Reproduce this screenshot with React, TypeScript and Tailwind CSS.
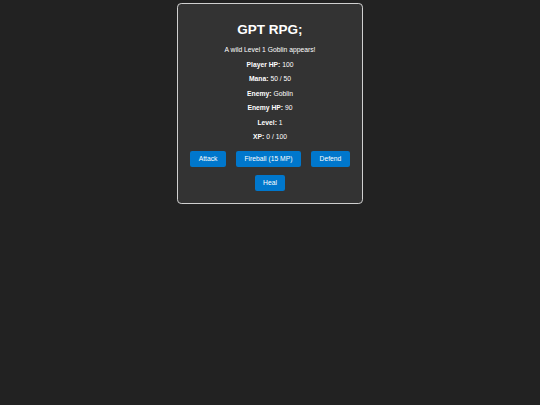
const STATS = [
  { label: "Player HP", value: "100" },
  { label: "Mana", value: "50 / 50" },
  { label: "Enemy", value: "Goblin" },
  { label: "Enemy HP", value: "90" },
  { label: "Level", value: "1" },
  { label: "XP", value: "0 / 100" },
];

const ACTIONS = ["Attack", "Fireball (15 MP)", "Defend", "Heal"];

export default function App() {
  return (
    <div
      className="min-h-screen w-full bg-[#222222] pt-[3.4px] text-white"
      style={{ fontFamily: '"Liberation Sans", Arial, sans-serif' }}
    >
      <div className="mx-auto w-[186.5px] rounded-[4.2px] border border-[#d0d0d0] bg-[#333333] px-[8.4px] py-[8.4px] text-center">
        <h1 className="my-[9px] text-[13.5px] font-bold leading-[15.5px]">GPT RPG;</h1>

        <p className="my-[6.75px] text-[6.75px] leading-[7.76px]">
          A wild Level 1 Goblin appears!
        </p>

        {STATS.map((s) => (
          <p key={s.label} className="my-[6.75px] text-[6.75px] leading-[7.76px]">
            <strong className="font-bold">{s.label}:</strong> {s.value}
          </p>
        ))}

        {/* actions */}
        <div className="mt-[6px] flex flex-wrap justify-center gap-x-[10.3px] gap-y-[8.4px] py-[3.4px]">
          {ACTIONS.map((a) => (
            <button
              key={a}
              className="cursor-pointer rounded-[2.1px] bg-[#0077cc] px-[8.4px] py-[4px] text-[6.75px] leading-[7.76px] text-white"
            >
              {a}
            </button>
          ))}
        </div>
      </div>
    </div>
  );
}
